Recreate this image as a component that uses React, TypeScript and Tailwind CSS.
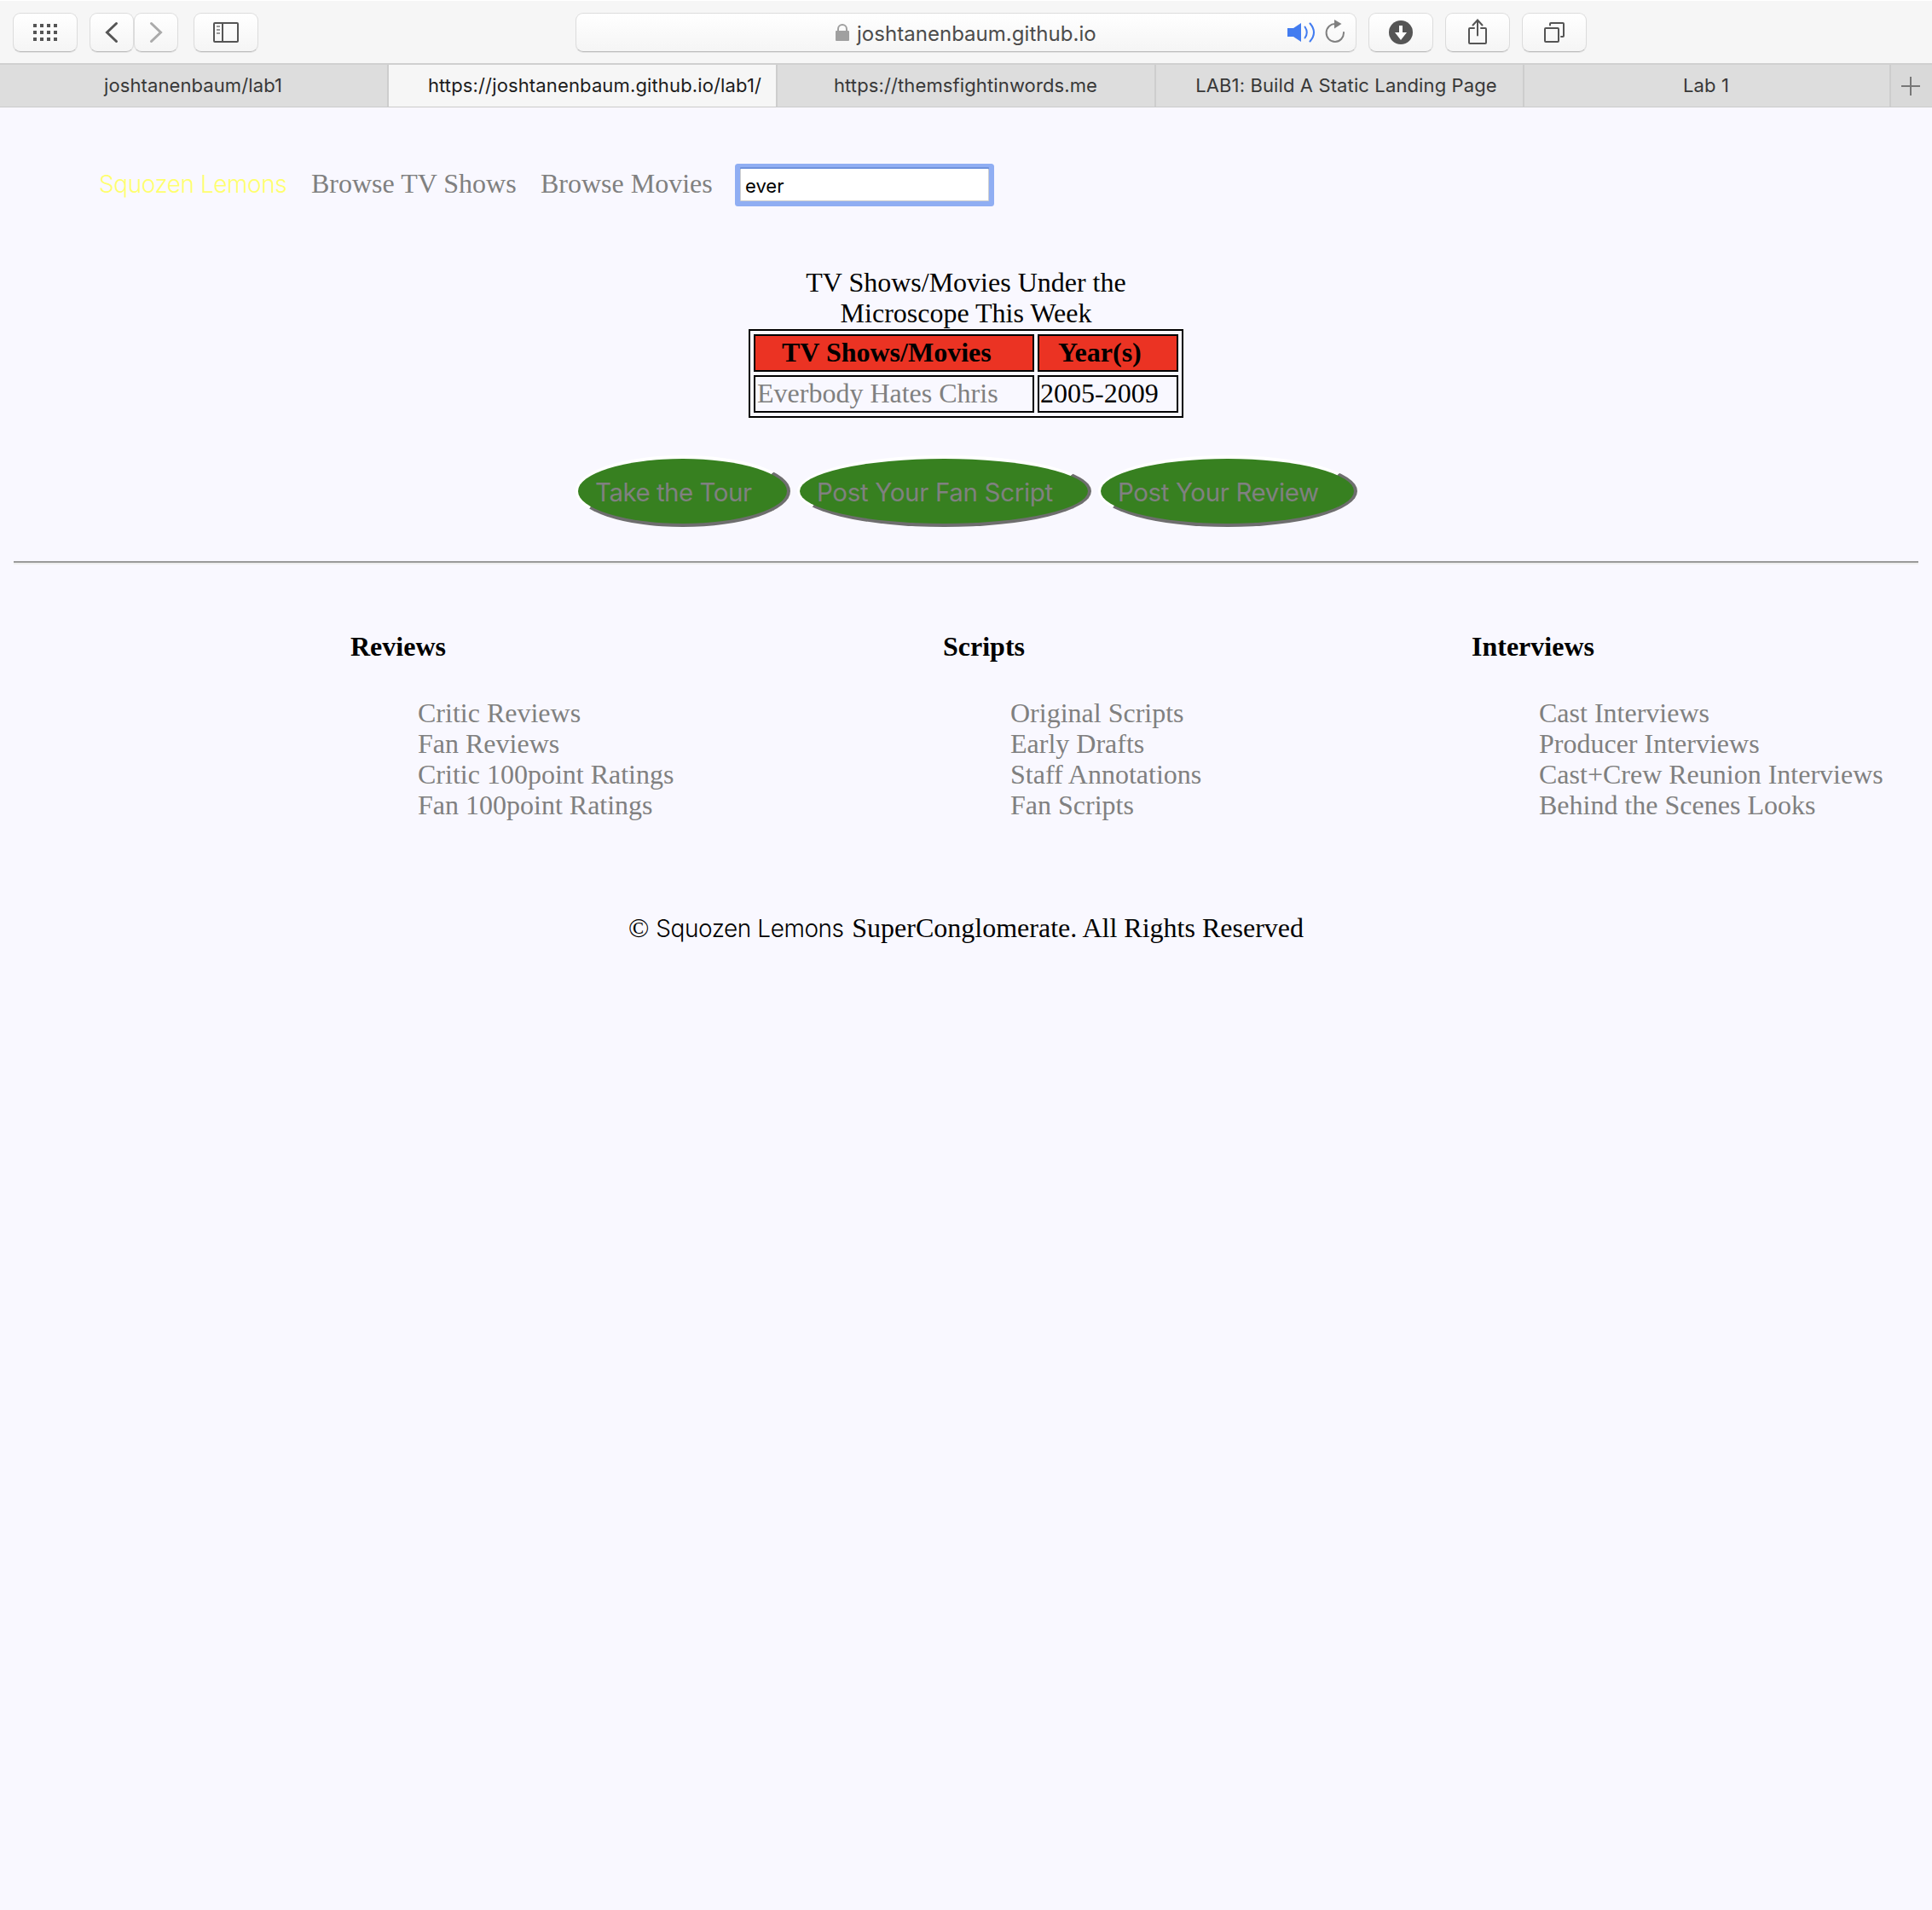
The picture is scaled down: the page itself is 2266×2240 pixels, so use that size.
import type { ReactNode } from 'react';

const toolButton =
  'flex h-[46px] shrink-0 items-center justify-center rounded-[9px] border border-[#dcdcdc] border-b-[#bdbdbd] bg-linear-to-b from-white to-[#f5f5f5] shadow-[0_1px_0_#e4e4e4]';

function GridIcon() {
  return (
    <svg width="28" height="20" viewBox="0 0 28 20" fill="#555">
      {[0, 8, 16].map((y) =>
        [0, 8, 16, 24].map((x) => <rect key={`${x}-${y}`} x={x} y={y} width="4" height="4" />),
      )}
    </svg>
  );
}

function Chevron({ dir, color }: { dir: 'left' | 'right'; color: string }) {
  return (
    <svg width="16" height="26" viewBox="0 0 16 26" fill="none" stroke={color} strokeWidth="3" strokeLinecap="round">
      <path d={dir === 'left' ? 'M13.5 2.5 2.5 13l11 10.5' : 'M2.5 2.5 13.5 13l-11 10.5'} />
    </svg>
  );
}

function SidebarIcon() {
  return (
    <svg width="30" height="24" viewBox="0 0 30 24" fill="none" stroke="#555" strokeWidth="2">
      <rect x="1" y="1" width="28" height="22" rx="1" />
      <path d="M11 1v22" />
      <path d="M4 5h4M4 9h4M4 13h4" stroke="#999" />
    </svg>
  );
}

function LockIcon() {
  return (
    <svg width="16" height="20" viewBox="0 0 16 20">
      <rect y="8" width="16" height="12" rx="1" fill="#a0a0a0" />
      <path d="M3 9V6a5 5 0 0 1 10 0v3" fill="none" stroke="#a0a0a0" strokeWidth="2" />
    </svg>
  );
}

function SpeakerIcon() {
  return (
    <svg width="33" height="24" viewBox="0 0 33 24">
      <path d="M0 7h7l9-6v22l-9-6H0z" fill="#427cf0" />
      <g fill="none" stroke="#427cf0" strokeWidth="2" strokeLinecap="round">
        <path d="M20.500 5.500q4.500 6.500 0 13" />
        <path d="M26.500 1.500q9 10.500 0 21" />
      </g>
    </svg>
  );
}

function ReloadIcon() {
  return (
    <svg width="24" height="28" viewBox="0 0 24 28">
      <path d="M12.500 6A10.200 10.500 0 1 0 22 16" fill="none" stroke="#808080" strokeWidth="2" strokeLinecap="round" />
      <path d="M11 1l8.500 5-8.500 5.500z" fill="#808080" />
    </svg>
  );
}

function DownloadIcon() {
  return (
    <svg width="28" height="28" viewBox="0 0 28 28">
      <circle cx="14" cy="14" r="14" fill="#555" />
      <path d="M12 6h4v8h5l-7 9-7-9h5z" fill="#fff" />
    </svg>
  );
}

function ShareIcon() {
  return (
    <svg width="22" height="30" viewBox="0 0 22 30" fill="none" stroke="#555" strokeWidth="2">
      <path d="M7 11H2a1 1 0 0 0-1 1v16a1 1 0 0 0 1 1h18a1 1 0 0 0 1-1V12a1 1 0 0 0-1-1h-5" strokeLinecap="round" />
      <path d="M11 19.500V2M5.500 7.500 11 1.500l5.500 6" strokeLinecap="round" />
    </svg>
  );
}

function WindowsIcon() {
  return (
    <svg width="24" height="24" viewBox="0 0 24 24" fill="none" stroke="#555" strokeWidth="2">
      <rect x="1" y="7" width="16" height="16" rx="1" />
      <path d="M7 3.500V2a1 1 0 0 1 1-1h14a1 1 0 0 1 1 1v14a1 1 0 0 1-1 1h-2" strokeLinecap="round" />
    </svg>
  );
}

function Toolbar() {
  return (
    <div className="flex h-[74px] items-start border-t border-white bg-[#f6f6f6] pl-[15px] pt-[14px]">
      <div className={`${toolButton} w-[76px]`}>
        <GridIcon />
      </div>
      <div className={`${toolButton} ml-[14px] w-[52px]`}>
        <Chevron dir="left" color="#555" />
      </div>
      <div className={`${toolButton} w-[52px]`}>
        <Chevron dir="right" color="#aaa" />
      </div>
      <div className={`${toolButton} ml-[18px] w-[76px]`}>
        <SidebarIcon />
      </div>
      <div className={`${toolButton} ml-[372px] w-[916px] !justify-start`}>
        <div className="ml-[304px]">
          <LockIcon />
        </div>
        <span className="ml-[9px] mt-[4px] w-[505px] whitespace-nowrap text-[24px] tracking-[0.03px] text-[#4c4c4c]">
          joshtanenbaum.github.io
        </span>
        <SpeakerIcon />
        <div className="ml-[11px] -mt-[4px]">
          <ReloadIcon />
        </div>
      </div>
      <div className={`${toolButton} ml-[14px] w-[76px]`}>
        <DownloadIcon />
      </div>
      <div className={`${toolButton} ml-[14px] w-[76px]`}>
        <div className="-mt-[2px]">
          <ShareIcon />
        </div>
      </div>
      <div className={`${toolButton} ml-[14px] w-[76px]`}>
        <WindowsIcon />
      </div>
    </div>
  );
}

const tabs = [
  { label: 'joshtanenbaum/lab1', box: 'w-[456px] pr-[1px]', text: 'tracking-[0.1px]' },
  { label: 'https://joshtanenbaum.github.io/lab1/', box: 'w-[456px] pl-[29px] !bg-[#f6f6f6] !text-[#1c1c1c]', text: 'tracking-[0.14px]' },
  { label: 'https://themsfightinwords.me', box: 'w-[444px] pr-[1px]', text: 'tracking-[0.12px]' },
  { label: 'LAB1: Build A Static Landing Page', box: 'w-[432px] pl-[16px]', text: 'tracking-[0.12px]' },
  { label: 'Lab 1', box: 'w-[430px] pr-[2px]', text: 'tracking-[0.1px]' },
];

function TabBar() {
  return (
    <div className="flex h-[52px] border-b border-t-2 border-b-[#cbcbcb] border-t-[#d0d0d0] bg-[#dddddd]">
      {tabs.map((t) => (
        <div
          key={t.label}
          className={`flex shrink-0 items-center justify-center border-r-2 border-[#cdcdcd] bg-[#dddddd] text-[22px] text-[#383838] ${t.box}`}
        >
          <span className={`whitespace-nowrap ${t.text}`}>{t.label}</span>
        </div>
      ))}
      <div className="flex flex-1 items-center justify-center bg-[#d9d9d9] pr-[2px]">
        <svg width="22" height="22" viewBox="0 0 22 22" stroke="#777" strokeWidth="2">
          <path d="M0 11h22M11 0v22" />
        </svg>
      </div>
    </div>
  );
}

function Brand({ className = '' }: { className?: string }) {
  return (
    <span
      className={`inline-block whitespace-nowrap pt-px font-[Inter,sans-serif] text-[28px] font-light tracking-[-0.45px] ${className}`}
    >
      Squozen Lemons
    </span>
  );
}

function PillButton({ className, children }: { className: string; children: ReactNode }) {
  return (
    <button
      className={`h-[84px] whitespace-nowrap rounded-[50%] border-4 border-b-[#6e6e6e] border-l-[3px] border-l-white border-r-[#6e6e6e] border-t-white bg-[#378020] pl-[20px] pt-[2px] text-left font-[Inter,sans-serif] text-[29.5px] text-[#808080] ${className}`}
    >
      {children}
    </button>
  );
}

const columns = [
  { title: 'Reviews', width: 'w-[695px]', items: ['Critic Reviews', 'Fan Reviews', 'Critic 100point Ratings', 'Fan 100point Ratings'] },
  { title: 'Scripts', width: 'w-[620px]', items: ['Original Scripts', 'Early Drafts', 'Staff Annotations', 'Fan Scripts'] },
  {
    title: 'Interviews',
    width: 'w-[500px]',
    items: ['Cast Interviews', 'Producer Interviews', 'Cast+Crew Reunion Interviews', 'Behind the Scenes Looks'],
  },
];

export default function App() {
  return (
    <div className="h-[2240px] w-[2266px] overflow-hidden bg-[#f9f8ff] font-[Inter,sans-serif]">
      <Toolbar />
      <TabBar />
      <main className="font-['Liberation_Serif',serif] text-[32px] leading-[36px] text-black">
        <nav className="flex h-[187px] items-start pl-[116px] pt-[66px] text-[#808080]">
          <div className="mt-[5px] h-[36px] w-[249px]">
            <Brand className="text-[#ffff6e]" />
          </div>
          <a className="mt-[5px] w-[269px] whitespace-nowrap">Browse TV Shows</a>
          <a className="mt-[5px] w-[234px] whitespace-nowrap">Browse Movies</a>
          <div className="mt-[6px] rounded-[1px] bg-[#cfcfcf] p-px pt-0 shadow-[0_-2px_0_0_#6f92dc,0_0_0_6px_#90aef3]">
            <input
              readOnly
              value="ever"
              className="block h-[37px] w-[290px] rounded-none bg-white pl-[5px] pt-[3px] font-[Inter,sans-serif] text-[22px] text-black outline-none"
            />
          </div>
        </nav>

        <table className="mx-auto w-[510px] border-separate border-spacing-[4px] border-2 border-black">
          <caption className="h-[73px] text-center">
            TV Shows/Movies Under the
            <br />
            Microscope This Week
          </caption>
          <tbody>
            <tr className="bg-[#eb3323] text-left font-bold">
              <th className="h-[44px] w-[329px] border-2 border-black p-0 pb-[2px] pl-[31px]">TV Shows/Movies</th>
              <th className="w-[165px] border-2 border-black p-0 pb-[2px] pl-[22px]">Year(s)</th>
            </tr>
            <tr>
              <td className="h-[44px] border-2 border-black p-0 pb-[2px] pl-[2px] text-[#808080]">
                Everbody Hates Chris
              </td>
              <td className="border-2 border-black p-0 pb-[2px] pl-px">2005-2009</td>
            </tr>
          </tbody>
        </table>

        <div className="flex h-[168px] gap-[8px] pl-[675px] pt-[44px]">
          <PillButton className="w-[252px] tracking-[-0.5px]">Take the Tour</PillButton>
          <PillButton className="w-[345px] tracking-[-0.33px]">Post Your Fan Script</PillButton>
          <PillButton className="w-[304px] tracking-[-0.38px]">Post Your Review</PillButton>
        </div>
        <hr className="mx-[16px] h-[4px] border-b-2 border-t-2 border-b-[#eeeeee] border-t-[#9a9a9a]" />

        <footer>
          <div className="flex pl-[411px] pt-[78px]">
            {columns.map((c) => (
              <section key={c.title} className={`shrink-0 ${c.width}`}>
                <h4 className="font-bold">{c.title}</h4>
                <ul className="mt-[42px] pl-[79px] text-[#808080]">
                  {c.items.map((i) => (
                    <li key={i} className="whitespace-nowrap">
                      {i}
                    </li>
                  ))}
                </ul>
              </section>
            ))}
          </div>
          <p className="mt-[108px] flex h-[36px] justify-center gap-[8px] whitespace-nowrap">
            <span>©</span>
            <Brand className="w-[222px]" />
            <span>SuperConglomerate. All Rights Reserved</span>
          </p>
        </footer>
      </main>
    </div>
  );
}
